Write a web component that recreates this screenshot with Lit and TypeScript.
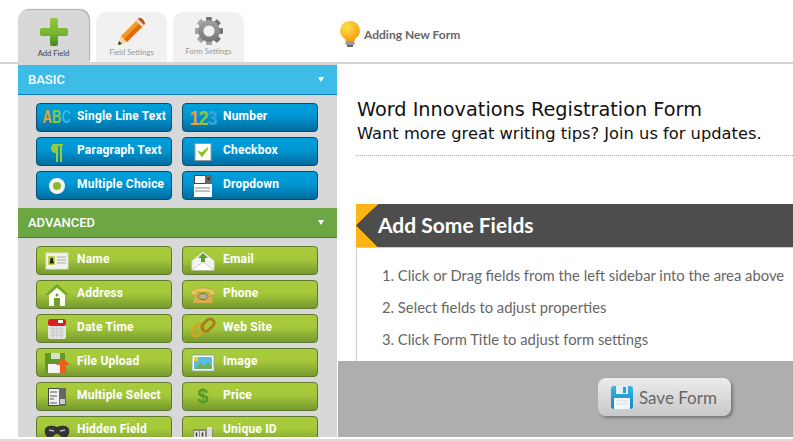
import { LitElement, html, css, svg } from "lit";
import { customElement } from "lit/decorators.js";

const I = (w: number, h: number, body: unknown) =>
  html`<svg width=${w} height=${h} viewBox="0 0 ${w} ${h}">${body}</svg>`;

const icons: Record<string, unknown> = {
  abc: html`<span class="abc"><b style="color:#e8a030">A</b><b style="color:#8cc63f">B</b><b style="color:#39b5e0">C</b></span>`,
  num: html`<span class="abc num"><b style="color:#e8a030">1</b><b style="color:#8cc63f">2</b><b style="color:#39a5d8">3</b></span>`,
  para: I(26, 22, svg`<path d="M9 3h10v2h-1v16h-2V5h-2v16h-2V12c-3 0-5-2-5-4.500S9 3 9 3z" fill="#9ccb2f"/>`),
  check: I(26, 22, svg`<rect x="5" y="2.500" width="16" height="17" fill="#fff" stroke="#999"/><path d="M9 11l3 4 6-8-6 5z" fill="#8cc220" stroke="#8cc220" stroke-width="1.500"/>`),
  radio: I(26, 22, svg`<circle cx="13" cy="11" r="8" fill="#f4f4f4"/><circle cx="13" cy="11" r="4" fill="#8cb82a"/>`),
  drop: I(26, 24, svg`<rect x="4" y="1" width="18" height="22" fill="#fff"/><rect x="4.500" y="1.500" width="17" height="8" fill="#fff" stroke="#444"/><rect x="15" y="1" width="7" height="9" fill="#666"/><path d="M17 4h3l-1.500 2z" fill="#111"/><path d="M5 14h15M5 17h15" stroke="#aaa" stroke-width="1.500"/>`),
  name: I(26, 20, svg`<rect x="2" y="2" width="22" height="16" fill="#f2f2ea" stroke="#ddd"/><rect x="4" y="5" width="7" height="9" fill="#b9d34a"/><path d="M7.500 6.500a1.500 1.500 0 011.500 2l1 4H5.500l1-4a1.500 1.500 0 011-2z" fill="#222"/><path d="M13 6h9M13 9h9M13 12h9" stroke="#aaa"/>`),
  email: I(26, 22, svg`<path d="M2 11L13 2l11 9v9H2z" fill="#f3f3f0" stroke="#ddd"/><path d="M2 20l11-8 11 8" fill="#fff" stroke="#ccc"/><path d="M13 3l5 5h-3v4h-4V8H8z" fill="#5f9e2a"/>`),
  addr: I(26, 24, svg`<path d="M13 1L1 12h3l9-8 9 8h3z" fill="#6aa52c"/><path d="M5 12l8-7 8 7v11H5z" fill="#fff"/><rect x="10" y="15" width="6" height="8" fill="#6f9e2b"/><circle cx="13" cy="12" r="1.500" fill="#6f9e2b"/>`),
  phone: I(26, 22, svg`<path d="M1 9c0-3 6-5 12-5s12 2 12 5v2h-6V8H7v3H1z" fill="#e6c860" stroke="#a98a30" stroke-width=".5"/><path d="M6 9h14l3 10H3z" fill="#d8ae4c"/><ellipse cx="13" cy="12.500" rx="5" ry="3" fill="#b9ad8e" stroke="#7c6a30"/>`),
  date: I(26, 22, svg`<rect x="4" y="1" width="18" height="20" rx="2" fill="#e4e4e4"/><rect x="4" y="1" width="18" height="7" rx="2" fill="#d82020"/><path d="M6 11h14M6 14h14M6 17h14M9 9v11M13 9v11M17 9v11" stroke="#bbb" stroke-width=".7"/><rect x="14" y="2" width="5" height="3" fill="#fff"/>`),
  web: I(26, 24, svg`<g fill="none" stroke-width="3"><rect x="1" y="9" width="14" height="8" rx="4" transform="rotate(-45 8 13)" stroke="#d9a41f"/><rect x="11" y="4" width="14" height="8" rx="4" transform="rotate(-45 18 8)" stroke="#a87c1c"/></g>`),
  file: I(28, 24, svg`<rect x="2" y="2" width="20" height="20" rx="1" fill="#5c9a2c"/><rect x="8" y="2" width="9" height="6" fill="#d7dfc8"/><rect x="5" y="13" width="14" height="9" fill="#f4f4f4"/><path d="M20 7l7 7h-4v8h-6v-8h-4z" fill="#e8601c"/>`),
  image: I(26, 22, svg`<rect x="2" y="3" width="22" height="16" fill="#fff" stroke="#8aa"/><rect x="4" y="5" width="18" height="12" fill="#5cbde4"/><path d="M4 17l6-6 4 3 4-4 4 4v3z" fill="#6fae5a"/><rect x="4" y="5" width="4" height="4" fill="#f4d020"/>`),
  msel: I(26, 24, svg`<rect x="4.500" y="3.500" width="17" height="17" fill="#f2f2f2" stroke="#444"/><rect x="15" y="3" width="7" height="18" fill="#666"/><path d="M6 7h7M6 11h7M6 14h4M6 18h7" stroke="#555" stroke-width="1.200"/><rect x="16" y="14" width="5" height="5" fill="#ccc"/>`),
  price: html`<span class="dollar">$</span>`,
  hidden: I(26, 18, svg`<path d="M1 7c2-4 7-4 12-2 5-2 10-2 12 2 1 4-1 9-5 9-3 0-4-4-7-4s-4 4-7 4C2 16 0 11 1 7z" fill="#333"/><path d="M5 8l5 1M21 8l-5 1" stroke="#bbb" stroke-width="1.500"/>`),
  uid: I(26, 18, svg`<rect x="3" y="7" width="20" height="10" fill="#8a8a80"/><rect x="4" y="9" width="5" height="7" fill="#e2e2da"/><rect x="10" y="9" width="5" height="7" fill="#e2e2da"/><rect x="17" y="5" width="5" height="11" fill="#ddd"/><path d="M6.500 10.500v4M12.500 10.500v4" stroke="#333" stroke-width="1.500"/>`),
};

const basic = [
  ["abc", "Single Line Text"], ["num", "Number"],
  ["para", "Paragraph Text"], ["check", "Checkbox"],
  ["radio", "Multiple Choice"], ["drop", "Dropdown"],
];
const advanced = [
  ["name", "Name"], ["email", "Email"],
  ["addr", "Address"], ["phone", "Phone"],
  ["date", "Date Time"], ["web", "Web Site"],
  ["file", "File Upload"], ["image", "Image"],
  ["msel", "Multiple Select"], ["price", "Price"],
  ["hidden", "Hidden Field"], ["uid", "Unique ID"],
];

const gear = () => {
  const teeth = [0, 45, 90, 135, 180, 225, 270, 315].map(
    (a) => svg`<rect x="12" y="0" width="6" height="30" rx="1" transform="rotate(${a} 15 15)" fill="url(#g)"/>`
  );
  return html`<svg width="28" height="28" viewBox="0 0 30 30">
    <defs><linearGradient id="g" gradientUnits="userSpaceOnUse" x1="0" y1="0" x2="0" y2="30"><stop offset="0" stop-color="#a8a8a8"/><stop offset="1" stop-color="#707070"/></linearGradient></defs>
    ${teeth}
    <circle cx="15" cy="15" r="11.500" fill="url(#g)"/>
    <circle cx="15" cy="15" r="6" fill="#f1f1f1"/>
  </svg>`;
};

@customElement("app-root")
export class AppRoot extends LitElement {
  static styles = css`
    :host { display: block; height: 441px; overflow: hidden; background: #fff; font-family: "Lato", sans-serif; }
    .top { height: 62px; display: flex; align-items: flex-end; padding-left: 18px; box-sizing: border-box; }
    .tab { width: 71px; height: 50px; margin-right: 6px; background: #f1f1f1; border-radius: 10px 10px 0 0; display: flex; flex-direction: column; align-items: center; font: 7.6px/10px "Lato", sans-serif; color: #999; box-sizing: border-box; padding-top: 4px; }
    .tab svg { display: block; }
    .tab.on { height: 52px; margin-right: 7px; background: #d8d8d8; color: #444; box-shadow: 1px -1px 1px #aaa; padding-top: 7px; }
    .tab.gear { padding-top: 5px; }
    .lbl { margin-top: 1px; }
    .hint { display: flex; align-items: center; margin-left: 90px; margin-bottom: 15px; font-size: 12px; font-weight: 700; color: #666; gap: 4px; }
    .body { display: flex; height: 373px; border-top: 2px solid #d4d4d4; }
    .side { width: 319px; margin-left: 18px; margin-top: -1px; padding-top: 2px; background: #d8d8d8; overflow: hidden; box-sizing: border-box; height: 374px; flex: none; }
    .head { height: 30px; box-sizing: border-box; display: flex; align-items: center; justify-content: space-between; padding: 0 13px 0 10px; color: #fff; font: 500 13px "Roboto", sans-serif; }
    .head i { width: 0; height: 0; border: 3.500px solid transparent; border-top: 5px solid #fff; border-bottom: 0; }
    .head.blue { background: #3dbce8; border-bottom: 1px solid #0f7fbf; }
    .head.green { background: #6da744; border-bottom: 1px solid #4c7a2b; margin-top: 1px; }
    .grid { display: grid; grid-template-columns: 136px 136px; column-gap: 10px; row-gap: 5px; padding: 8px 0 7px 18px; }
    .btn { height: 29px; box-sizing: border-box; border-radius: 4px; display: flex; color: #fff; font: 700 12px/1 "Roboto", sans-serif; letter-spacing: .2px; }
    .btn.b { background: linear-gradient(#00a0dc 0%, #0096d2 45%, #006c9f 100%); border: 1px solid #0b4a70; }
    .btn.g { background: linear-gradient(#a9cc3c 0%, #a4c83a 45%, #76992f 100%); border: 1px solid #5f7a2c; }
    .btn .ic { width: 40px; display: flex; align-items: center; justify-content: center; flex: none; }
    .btn .t { padding-top: 6px; }
    .abc { display: inline-block; font: 700 18px "Liberation Sans", sans-serif; transform: scaleX(.72); }
    .abc b { font-weight: 700; }
    .num { font-size: 21px; transform: scaleX(.85); letter-spacing: -1px; }
    .dollar { color: #4f9a28; font: 700 20px "Liberation Sans", sans-serif; }
    .main { flex: 1; min-width: 0; display: flex; flex-direction: column; margin-left: 1px; overflow: hidden; }
    .form { padding: 34px 0 0 18px; flex: 1; min-width: 0; display: flex; flex-direction: column; }
    .title { font: 19.300px/23px "DejaVu Sans", sans-serif; color: #111; white-space: nowrap; padding-left: 1px; }
    .sub { font: 16.300px/23px "DejaVu Sans", sans-serif; color: #111; white-space: nowrap; padding-left: 1px; padding-top: 1px; }
    .dots { border-bottom: 1px dotted #aaa; height: 10px; }
    .panel { margin-top: 48px; border-left: 1px solid #ccc; flex: 1; }
    .bar { height: 43px; background: #4d4d4d; position: relative; color: #fff; font: 700 21px/41px "Lato", sans-serif; padding-left: 22px; border-bottom: 1px solid #ccc; margin-left: -1px; }
    .bar::before { content: ""; position: absolute; left: 0; top: 0; width: 22px; height: 43px; background: linear-gradient(to bottom right, #fdb515 50%, transparent 50.500%) top / 100% 50% no-repeat, linear-gradient(to top right, #fdb515 50%, transparent 50.500%) bottom / 100% 50% no-repeat; }
    ol { margin: 0; padding: 11px 0 0 25px; list-style: none; font: 14.800px/32px "Lato", sans-serif; color: #666; white-space: nowrap; font-variant-ligatures: common-ligatures; }
    .foot { height: 76px; background: #aeaeae; display: flex; justify-content: flex-end; padding: 17px 62px 0 0; box-sizing: border-box; flex: none; }
    .save { width: 133px; height: 38px; border-radius: 8px; background: linear-gradient(#ececec, #c8c8ca); box-shadow: 2px 2px 3px #777; display: flex; align-items: center; gap: 6px; padding-left: 13px; box-sizing: border-box; color: #666; font: 17px "Lato", sans-serif; }
    .bottom { height: 2px; background: #fff; }
    .bottom2 { height: 2px; background: #dcdcdc; }
  `;

  private buttons(items: string[][], cls: string) {
    return html`<div class="grid">
      ${items.map(([ic, t]) => html`<div class="btn ${cls}"><span class="ic">${icons[ic]}</span><span class="t">${t}</span></div>`)}
    </div>`;
  }

  render() {
    return html`
      <div class="top">
        <div class="tab on">
          <svg width="30" height="30" viewBox="0 0 30 30">
            <defs><linearGradient id="p" x1="0" y1="0" x2="0" y2="1"><stop offset="0" stop-color="#92c83e"/><stop offset=".55" stop-color="#78b530"/><stop offset="1" stop-color="#3c8a26"/></linearGradient></defs>
            <path d="M11 3a2 2 0 012-2h4a2 2 0 012 2v8h8a2 2 0 012 2v4a2 2 0 01-2 2h-8v8a2 2 0 01-2 2h-4a2 2 0 01-2-2v-8H3a2 2 0 01-2-2v-4a2 2 0 012-2h8z" fill="url(#p)"/>
          </svg>
          <div class="lbl">Add Field</div>
        </div>
        <div class="tab">
          <svg width="30" height="30" viewBox="0 0 30 30">
            <path d="M1 29l3-9L20 4l6 6L10 26z" fill="#f49a22"/>
            <path d="M7 23l3 3 16-16-3-3z" fill="#e06a12"/>
            <path d="M20 4l2-2c2-1 6 3 6 6l-2 2z" fill="#b9501e"/>
            <path d="M19 5l2-2 6 6-2 2z" fill="#e8e0d0"/>
            <path d="M1 29l3-9 6 6z" fill="#f6d8a8"/>
            <path d="M1 29l1-4 3 3z" fill="#333"/>
          </svg>
          <div class="lbl">Field Settings</div>
        </div>
        <div class="tab gear">
          ${gear()}
          <div class="lbl">Form Settings</div>
        </div>
        <div class="hint">
          <svg width="20" height="26" viewBox="0 0 20 26">
            <defs><radialGradient id="b" cx=".35" cy=".3" r=".8"><stop offset="0" stop-color="#ffe14a"/><stop offset="1" stop-color="#f79a0a"/></radialGradient></defs>
            <path d="M10 0a9.500 9.500 0 016 17c-1 1-1.500 2-1.500 3h-9c0-1-.5-2-1.500-3A9.500 9.500 0 0110 0z" fill="url(#b)"/>
            <rect x="5.500" y="20" width="9" height="4" rx="1" fill="#999"/><rect x="7" y="24" width="6" height="2" fill="#666"/>
          </svg>
          Adding New Form
        </div>
      </div>
      <div class="body">
        <div class="side">
          <div class="head blue">BASIC<i></i></div>
          ${this.buttons(basic, "b")}
          <div class="head green">ADVANCED<i></i></div>
          ${this.buttons(advanced, "g")}
        </div>
        <div class="main">
          <div class="form">
            <div class="title">Word Innovations Registration Form</div>
            <div class="sub">Want more great writing tips? Join us for updates.</div>
            <div class="dots"></div>
            <div class="panel">
              <div class="bar">Add Some Fields</div>
              <ol>
                <li>1. Click or Drag fields from the left sidebar into the area above</li>
                <li>2. Select fields to adjust properties</li>
                <li>3. Click Form Title to adjust form settings</li>
              </ol>
            </div>
          </div>
          <div class="foot">
            <div class="save">
              <svg width="22" height="23" viewBox="0 0 22 23">
                <defs><linearGradient id="s" x1="0" y1="0" x2="0" y2="1"><stop offset="0" stop-color="#3cb4e6"/><stop offset="1" stop-color="#1684c4"/></linearGradient></defs>
                <rect width="22" height="23" rx="3" fill="url(#s)"/>
                <rect x="5" y="0" width="12" height="8" fill="#dff0f8"/><rect x="12" y="1" width="3" height="6" fill="#2a9fd8"/>
                <rect x="3" y="12" width="16" height="11" fill="#f4f8fa"/>
                <path d="M5 15h12M5 18h12" stroke="#cde" stroke-width="1"/>
              </svg>
              Save Form
            </div>
          </div>
        </div>
      </div>
      <div class="bottom"></div><div class="bottom2"></div>
    `;
  }
}
